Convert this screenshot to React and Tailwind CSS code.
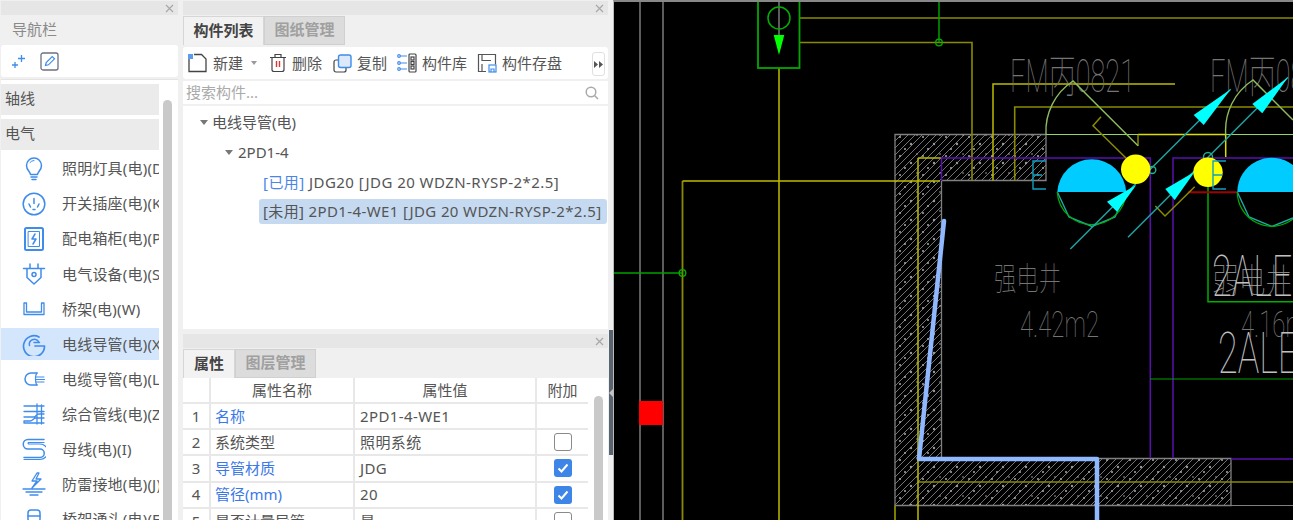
import React from 'react';

const BLUE = '#3f8ceb';

// Small line icons for the navigation list
const Svg = ({ children, size = 24 }) => (
  <svg width={size} height={size} viewBox="0 0 24 24" fill="none" stroke={BLUE} strokeWidth="1.500" strokeLinecap="round" strokeLinejoin="round">
    {children}
  </svg>
);

const navIcons = {
  bulb: (
    <Svg>
      <path d="M8.500 17.500c0-2.500-4-4-4-9a7.500 7.500 0 0 1 15 0c0 5-4 6.500-4 9z" />
      <path d="M8 5.500a5 5 0 0 1 4-2" strokeWidth="1" />
      <path d="M9 20h6M10 22.500h4" />
    </Svg>
  ),
  socket: (
    <Svg>
      <circle cx="12" cy="12" r="10.800" />
      <path d="M12 6.500v5M7 12l1.500 3M17 12l-1.500 3M11 17.500h2" />
    </Svg>
  ),
  box: (
    <Svg>
      <rect x="3" y="1" width="18" height="22" rx="1.500" strokeWidth="2" />
      <rect x="6.500" y="4.500" width="11" height="15" strokeWidth="1" />
      <path d="M13 7l-3 5h4l-3 5" />
    </Svg>
  ),
  device: (
    <Svg>
      <path d="M1.500 6.500h21M5 6.500v9l7 6.500 7-6.500v-9M8 2v4.500M16 2v4.500" />
      <circle cx="12" cy="12.500" r="2" />
    </Svg>
  ),
  tray: (
    <Svg>
      <path d="M2 6h2.500v9h15V6H22v11.500H2z" strokeWidth="1.300" />
    </Svg>
  ),
  conduit: (
    <Svg>
      <path d="M17 5A10.500 10.500 0 1 0 22.500 14H13" strokeWidth="1.700" />
      <path d="M16.500 9.500a5 5 0 0 0-9 4" />
      <path d="M12 10.500h5.500" />
    </Svg>
  ),
  cable: (
    <Svg>
      <path d="M15 6H9a6 6 0 0 0 0 12h6" />
      <path d="M15 6c-2 2-2 10 0 12M14 10h8M13.500 12.500h9M14 15h8" strokeWidth="1.200" />
    </Svg>
  ),
  mixed: (
    <Svg>
      <path d="M2 4h20M2 9.500h20M15 2v20M19.500 3v19M2 15h10c2 0 2-3 5-3h5M2 21v-2h6c3 0 3-3 6-3h8M2 21h20" strokeWidth="1.300" />
    </Svg>
  ),
  bus: (
    <Svg>
      <path d="M22 2.500H6a4.500 4.500 0 0 0 0 9.500h12a3.500 3.500 0 0 1 0 8.500H2" />
      <path d="M22 6.500H6.500a1 1 0 0 0 0 1.500H18a7.500 7.500 0 0 1 0 15.500H2" strokeWidth="1.200" transform="translate(0 -1)" />
    </Svg>
  ),
  ground: (
    <Svg>
      <path d="M15 1l-5 8h5l-5 7 9-9h-5l3-6zM1 17h22M4 20h16M8 23h8" strokeWidth="1.300" />
    </Svg>
  ),
  joint: (
    <Svg>
      <rect x="6" y="3" width="12" height="12" rx="3" />
      <path d="M5 15h14v6H5zM6 9h12" />
    </Svg>
  ),
};

const navItems = [
  ['bulb', '照明灯具(电)(D)'],
  ['socket', '开关插座(电)(K)'],
  ['box', '配电箱柜(电)(P)'],
  ['device', '电气设备(电)(S)'],
  ['tray', '桥架(电)(W)'],
  ['conduit', '电线导管(电)(X)', true],
  ['cable', '电缆导管(电)(L)'],
  ['mixed', '综合管线(电)(Z)'],
  ['bus', '母线(电)(I)'],
  ['ground', '防雷接地(电)(J)'],
  ['joint', '桥架通头(电)(F)'],
];

const rows = [
  { no: 1, name: '名称', value: '2PD1-4-WE1', blue: true, check: null },
  { no: 2, name: '系统类型', value: '照明系统', check: false },
  { no: 3, name: '导管材质', value: 'JDG', blue: true, check: true },
  { no: 4, name: '管径(mm)', value: '20', blue: true, check: true },
  { no: 5, name: '是否计量导管', value: '是', check: false },
];

const CloseBar = () => (
  <div className="h-[14px] bg-[#e6e6e6] flex items-center justify-end pr-[4px] shrink-0">
    <svg width="9" height="9" viewBox="0 0 9 9" stroke="#a8a8a8" strokeWidth="1.200"><path d="M1 1l7 7M8 1l-7 7" /></svg>
  </div>
);

const Caret = () => <span className="w-0 h-0 border-x-[4px] border-x-transparent border-t-[5px] border-t-[#777]" />;

const ToolBtn = ({ icon, label, className }) => (
  <div className={`flex items-center gap-[5px] shrink-0 ${className}`}>
    {icon}
    <span>{label}</span>
  </div>
);

const Check = ({ on }) => {
  if (on === null) return null;
  return on ? (
    <span className="w-[18px] h-[18px] rounded-[3px] bg-[#3d85e6] flex items-center justify-center">
      <svg width="12" height="12" viewBox="0 0 12 12" fill="none" stroke="#fff" strokeWidth="2"><path d="M1.500 6.500l3 3 6-7" /></svg>
    </span>
  ) : (
    <span className="w-[18px] h-[18px] rounded-[3px] bg-white border border-[#8a8a8a]" />
  );
};

function NavPanel() {
  return (
    <aside className="w-[177px] shrink-0 flex flex-col ml-px">
      <CloseBar />
      <div className="h-[27px] mt-px flex items-center pl-[11px] text-[#8a8a8a] shrink-0">导航栏</div>
      <div className="h-[32px] mt-[2px] bg-white rounded-[3px] flex items-center pl-[9px] gap-[13px] shrink-0">
        <svg width="17" height="16" viewBox="0 0 17 16" fill="none" stroke={BLUE} strokeWidth="1.300">
          <path d="M11.500 2v7M8 5.500h7M5 9v6M2 12h6" />
        </svg>
        <svg width="19" height="19" viewBox="0 0 19 19" fill="none">
          <rect x="1" y="1" width="17" height="17" rx="2" stroke="#6b7280" strokeWidth="1.300" />
          <path d="M5.500 13.500l.7-3 6-6 2.300 2.300-6 6z" stroke={BLUE} strokeWidth="1.200" />
        </svg>
      </div>
      <div className="flex-1 mt-[2px] bg-white border-t border-[#e4e4e4] flex min-h-0 overflow-hidden">
        <div className="w-[158px] shrink-0 pt-[4px] text-[#555]">
          <div className="h-[31px] pb-[2px] bg-[#ebebeb] flex items-center pl-[4px]">轴线</div>
          <div className="h-[31px] pb-[2px] mt-[4px] bg-[#ebebeb] flex items-center pl-[4px]">电气</div>
          <div className="pt-[1px]">
            {navItems.map(([icon, label, active]) => (
              <div key={label} className="h-[35.100px] py-[2px]">
                <div className={`h-full flex items-center overflow-hidden whitespace-nowrap pl-[21px] ${active ? 'bg-[#d4e6fb]' : ''}`}>
                  <span className="w-[24px] shrink-0 flex justify-center">{navIcons[icon]}</span>
                  <span className="ml-[16px] tracking-[0.2px]">{label}</span>
                </div>
              </div>
            ))}
          </div>
        </div>
        <div className="w-[9px] ml-[4px] mt-[20px] bg-[#c9c9c9] rounded-t-[5px]" />
      </div>
    </aside>
  );
}

function ComponentList() {
  return (
    <section className="h-[328px] shrink-0 flex flex-col">
      <CloseBar />
      <div className="flex h-[29px] mt-px shrink-0">
        <div className="w-[81px] pb-[2px] bg-[#f2f2f2] border border-[#d6d6d6] border-b-0 flex items-center justify-center font-bold text-[#444]">构件列表</div>
        <div className="w-[81px] pb-[2px] bg-[#dcdcdc] border border-[#d0d0d0] flex items-center justify-center font-bold text-[#a0a0a0]">图纸管理</div>
      </div>
      <div className="h-[32px] mt-[2px] bg-white rounded-[3px] flex items-center pl-[4px] text-[#555] shrink-0 relative">
        <ToolBtn
          label="新建"
          icon={
            <svg width="21" height="20" viewBox="0 0 21 20" fill="none">
              <path d="M2 6v12.500h17V6l-4.500-4.500H7" stroke="#444" strokeWidth="1.300" />
              <rect x="1" y="1" width="5" height="5" fill="#5b9cf0" />
            </svg>
          }
        />
        <span className="ml-[8px] mr-[12px]"><span className="block w-0 h-0 border-x-[3px] border-x-transparent border-t-[4px] border-t-[#999]" /></span>
        <ToolBtn
          label="删除"
          className="mr-[11px]"
          icon={
            <svg width="18" height="20" viewBox="0 0 18 20" fill="none" stroke="#444" strokeWidth="1.200">
              <path d="M1 4.500h16M3 4.500v12a2 2 0 0 0 2 2h8a2 2 0 0 0 2-2v-12M6 4.500V1.500h6v3" />
              <path d="M7.500 8v6M10.500 8v6" stroke="#e03030" strokeWidth="1.400" />
            </svg>
          }
        />
        <ToolBtn
          label="复制"
          className="mr-[10px]"
          icon={
            <svg width="19" height="19" viewBox="0 0 19 19" fill="none">
              <rect x="1" y="6" width="12" height="12" rx="2" stroke="#444" strokeWidth="1.200" />
              <rect x="5.500" y="1" width="12.500" height="12.500" rx="2" fill="#dbe9fb" stroke="#3f8ceb" strokeWidth="1.400" />
            </svg>
          }
        />
        <ToolBtn
          label="构件库"
          className="mr-[10px]"
          icon={
            <svg width="20" height="20" viewBox="0 0 20 20" fill="none" stroke="#3f8ceb" strokeWidth="1.200">
              <rect x="12" y="1" width="7" height="18" rx="1" stroke="#444" />
              <rect x="14" y="4" width="3" height="3" stroke="#444" />
              <rect x="14" y="8.500" width="3" height="3" stroke="#444" />
              <rect x="14" y="13" width="3" height="3" stroke="#444" />
              <path d="M3 3h7M3 10h7M3 16h7" />
              <circle cx="2" cy="3" r="1.300" />
              <circle cx="2" cy="10" r="1.300" />
              <circle cx="2" cy="16" r="1.300" />
            </svg>
          }
        />
        <ToolBtn
          label="构件存盘"
          icon={
            <svg width="20" height="20" viewBox="0 0 20 20" fill="none" stroke="#555" strokeWidth="1.200">
              <path d="M9 18.500H1.500v-17h17v10M5 1.500v6h9M5 11v7.500" />
              <rect x="12" y="12" width="7" height="7" stroke="#3f8ceb" />
              <path d="M14 19v-3h3v3" stroke="#3f8ceb" />
            </svg>
          }
        />
        <div className="absolute right-[3px] top-[5px] w-[13px] h-[24px] border border-[#e0e0e0] rounded-[3px] bg-white flex items-center justify-center">
          <svg width="9" height="7" viewBox="0 0 9 7" fill="#555"><path d="M0 0l4 3.500L0 7zM5 0l4 3.500L5 7z" /></svg>
        </div>
      </div>
      <div className="h-[23px] mt-[2px] bg-white flex items-center justify-between px-[3px] pr-[9px] text-[#aaa] shrink-0">
        <span>搜索构件...</span>
        <svg width="14" height="14" viewBox="0 0 14 14" fill="none" stroke="#aaa" strokeWidth="1.500"><circle cx="6" cy="6" r="4.800" /><path d="M9.500 9.500L13 13" /></svg>
      </div>
      <div className="flex-1 mt-[2px] bg-white text-[#555] pt-[1px] whitespace-nowrap">
        <div className="h-[30px] flex items-center pl-[17px] gap-[4px]"><Caret />电线导管(电)</div>
        <div className="h-[30px] flex items-center pl-[42px] gap-[5px]"><Caret />2PD1-4</div>
        <div className="h-[30px] flex items-center pl-[80px] tracking-[0.45px]"><span className="text-[#4a86e8]">[已用]</span>&nbsp;JDG20 [JDG 20 WDZN-RYSP-2*2.5]</div>
        <div className="h-[25px] mt-[2px] ml-[76px] mr-px bg-[#c5daf1] rounded-[3px] flex items-center pl-[4px] tracking-[0.37px]">[未用] 2PD1-4-WE1 [JDG 20 WDZN-RYSP-2*2.5]</div>
      </div>
    </section>
  );
}

function PropertyPanel() {
  return (
    <section className="flex-1 mt-[5px] flex flex-col min-h-0 overflow-hidden">
      <CloseBar />
      <div className="flex h-[29px] mt-px shrink-0 bg-[#f0f0f0]">
        <div className="w-[52px] pb-[2px] bg-[#f2f2f2] border border-[#d6d6d6] border-b-0 flex items-center justify-center font-bold text-[#444]">属性</div>
        <div className="w-[81px] pb-[2px] bg-[#dcdcdc] border border-[#d0d0d0] flex items-center justify-center font-bold text-[#a0a0a0]">图层管理</div>
      </div>
      <div className="flex-1 bg-white flex min-h-0 text-[#555]">
        <div className="w-[405px] shrink-0">
          <div className="flex h-[26px] border-b-2 border-[#e8e8e8] bg-white">
            <div className="w-[28px] border-r-2 border-[#e8e8e8]" />
            <div className="w-[144px] border-r-2 border-[#e8e8e8] flex items-center justify-center">属性名称</div>
            <div className="w-[182px] border-r-2 border-[#e8e8e8] flex items-center justify-center">属性值</div>
            <div className="w-[51px] flex items-center justify-center">附加</div>
          </div>
          {rows.map((r) => (
            <div key={r.no} className="flex h-[26.200px] border-b-2 border-[#e8e8e8]">
              <div className="w-[28px] border-r-2 border-[#e8e8e8] flex items-center justify-center">{r.no}</div>
              <div className={`w-[144px] border-r-2 border-[#e8e8e8] flex items-center pl-[4px] ${r.blue ? 'text-[#3b78e7]' : ''}`}>{r.name}</div>
              <div className="w-[182px] border-r-2 border-[#e8e8e8] flex items-center pl-[5px] tracking-[0.4px]">{r.value}</div>
              <div className="w-[51px] flex items-center justify-center"><Check on={r.check} /></div>
            </div>
          ))}
        </div>
        <div className="w-[9px] ml-[6px] mt-[18px] bg-[#c9c9c9] rounded-t-[5px]" />
      </div>
    </section>
  );
}

// CAD drawing, drawn in page coordinates via the viewBox
function CadCanvas() {
  const cadFont = "font-['Roboto','Noto_Sans_CJK_SC',sans-serif]";
  return (
    <main className="flex-1 bg-black border-l border-[#bbb] border-t-2 border-t-[#888] min-w-0 overflow-hidden">
      <svg width="679" height="518" viewBox="614 2 679 518" fill="none" className="block">
        <defs>
          <pattern id="hatch" width="7" height="7" patternUnits="userSpaceOnUse">
            <path d="M-1 8L8 -1M-1 1L1 -1M6 8L8 6" stroke="#747474" strokeWidth="1" />
          </pattern>
          <pattern id="speckle" width="23" height="19" patternUnits="userSpaceOnUse">
            <circle cx="3" cy="4" r="1" fill="#aaa" />
            <circle cx="14" cy="11" r="1.200" fill="#999" />
            <circle cx="20" cy="2" r="0.800" fill="#aaa" />
            <circle cx="8" cy="16" r="1" fill="#aaa" />
          </pattern>
        </defs>

        <path d="M640 0v520M663 0v520" stroke="#666" strokeWidth="1.800" />
        <rect x="639" y="401" width="24" height="24" fill="#ff0000" />

        <path d="M895 134.500H1046V180.500H941.500V458.500H1231V505.500H895Z" fill="url(#hatch)" stroke="#808080" strokeWidth="1.300" />
        <path d="M895 134.500H1046V180.500H941.500V458.500H1231V505.500H895Z" fill="url(#speckle)" />
        <path d="M895 505.500H1293" stroke="#808080" strokeWidth="1.200" />

        <path d="M800 18H1293M800 42.500H972V180.500M1014.700 180.500V107H1293M918 482H1293" stroke="#8a8a00" strokeWidth="1.600" />
        <path d="M682.500 181V520M895 505.500V520" stroke="#8a8a00" strokeWidth="1.800" />
        <path d="M779 68V520M682.500 181H940M918 158H941M918 158V520M993 180.500V84H1175" stroke="#bcbc00" strokeWidth="1.500" />
        <path d="M1138 134.500H1225.700V157" stroke="#dcdc00" strokeWidth="1.500" />
        <path d="M1138 134.500V146" stroke="#8a8a00" strokeWidth="1.500" />
        <path d="M1046 134.500H1138M1225.700 134.500H1293" stroke="#90d860" strokeWidth="1.200" />

        <path d="M779 1V35" stroke="#999" strokeWidth="1.200" />
        <rect x="758" y="-2" width="41.500" height="70" stroke="#00a800" strokeWidth="1.800" />
        <circle cx="779" cy="18" r="11" stroke="#00b000" strokeWidth="1.500" />
        <path d="M773.700 35H784.300L779 55Z" fill="#00ff00" />
        <path d="M939 0V42.500M613 273H682.500" stroke="#00a000" strokeWidth="1.500" />
        <circle cx="939" cy="42.500" r="3.300" stroke="#00b000" strokeWidth="1.300" />
        <circle cx="682.500" cy="273" r="3.300" stroke="#00b000" strokeWidth="1.300" />

        <path d="M941.500 181V158H1150.300V458M1173 458V158H1293M1231 459H1293" stroke="#5a10b0" strokeWidth="1.500" />
        <path d="M1208 172V301.700H1293" stroke="#00b000" strokeWidth="1.500" />
        <path d="M1150 379H1293" stroke="#00a000" strokeWidth="1.200" />
        <path d="M1188 192.300H1237" stroke="#a00000" strokeWidth="2" />

        <g className={cadFont} fill="#757575">
          <text x="1010" y="92" fontSize="46" fontWeight="100" textLength="125" lengthAdjust="spacingAndGlyphs">FM丙0821</text>
          <text x="1210" y="92" fontSize="46" fontWeight="100" textLength="125" lengthAdjust="spacingAndGlyphs">FM丙0821</text>
          <text x="994" y="290" fontSize="32" fontWeight="100" textLength="67" lengthAdjust="spacingAndGlyphs">强电井</text>
          <text x="1020" y="337" fontSize="36" fontWeight="100" textLength="79" lengthAdjust="spacingAndGlyphs">4.42m2</text>
          <text x="1241" y="337" fontSize="36" fontWeight="100" textLength="79" lengthAdjust="spacingAndGlyphs">4.16m2</text>
          <text x="1212" y="293" fontSize="34" fontWeight="100" fill="#888" textLength="80" lengthAdjust="spacingAndGlyphs">弱电井</text>
        </g>
        <g className={cadFont} fill="#c0c0c0">
          <text x="1212" y="296" fontSize="58" fontWeight="100" textLength="100" lengthAdjust="spacingAndGlyphs">2ALE1</text>
          <text x="1218" y="373" fontSize="58" fontWeight="100" textLength="100" lengthAdjust="spacingAndGlyphs">2ALE1</text>
        </g>

        <path d="M1046 134.500A60 60 0 0 1 1073 81L1138 145.700" stroke="#8fbc60" strokeWidth="1.400" />
        <path d="M1225.700 134.500A60 60 0 0 1 1253 80L1293 120" stroke="#8fbc60" strokeWidth="1.400" />
        <path d="M1101 116.700L1093 125.700L1126 158M1155.300 206L1165 216L1194.700 186.700" stroke="#8a8a00" strokeWidth="1.500" />

        <path d="M1057.300 192A34.500 34.500 0 0 1 1126.200 192Z" fill="#00ccff" />
        <path d="M1237.300 192A34.500 34.500 0 0 1 1293 165V192Z" fill="#00ccff" />
        <path d="M1057.300 192L1069 217L1092 226.500L1115 217L1126.200 192" stroke="#20a8a8" strokeWidth="1.400" />
        <path d="M1057.300 192A34.500 34.500 0 0 0 1126.200 192" stroke="#00b000" strokeWidth="1.200" />
        <path d="M1237.300 192L1249 217L1272 226.500L1293 218" stroke="#20a8a8" strokeWidth="1.400" />
        <path d="M1237.300 192A34.500 34.500 0 0 0 1293 219" stroke="#00b000" strokeWidth="1.200" />

        <path d="M1070.300 249L1230.700 89.300M1128 237.300L1288 77.300" stroke="#1fa5a5" strokeWidth="1.400" />
        <path d="M1230.700 89.300L1193.700 115L1203.700 125ZM1288 77.300L1252.300 104L1262.300 113.300ZM1136.300 185L1107 201.700L1117 211.700ZM1194.700 171.700L1165.300 189L1174.700 200Z" fill="#00ffff" />
        <circle cx="1152.300" cy="170" r="3.500" stroke="#20b090" strokeWidth="1.400" />
        <circle cx="1208" cy="157" r="4.500" stroke="#20b090" strokeWidth="1.400" />
        <circle cx="1135.700" cy="169.300" r="14.700" fill="#ffff00" />
        <circle cx="1208" cy="172.300" r="14.700" fill="#ffff00" />
        <path d="M1046 161H1033V189H1046M1033 175H1042M1226 161H1213V189H1226M1213 175H1222" stroke="#0f9fc0" strokeWidth="1.400" />

        <path d="M944 221L919 459H1097V521" stroke="#8fb8ff" strokeWidth="4.500" strokeLinejoin="round" strokeLinecap="round" />
      </svg>
    </main>
  );
}

export default function App() {
  return (
    <div className="w-[1293px] h-[520px] overflow-hidden bg-[#f0f0f0] flex text-[15px] font-['Noto_Sans','Noto_Sans_CJK_SC',sans-serif] pt-px">
      <NavPanel />
      <div className="w-[5px] shrink-0" />
      <div className="w-[425px] shrink-0 flex flex-col min-h-0">
        <ComponentList />
        <PropertyPanel />
      </div>
      <div className="w-[5px] shrink-0 pl-px pt-[329px]">
        <div className="h-[125px] w-[4px] bg-[#5a6470] flex items-center">
          <span className="w-0 h-0 border-y-[4px] border-y-transparent border-r-[4px] border-r-[#c0c4c8]" />
        </div>
      </div>
      <div className="flex-1 min-w-0 -mt-px flex"><CadCanvas /></div>
    </div>
  );
}
